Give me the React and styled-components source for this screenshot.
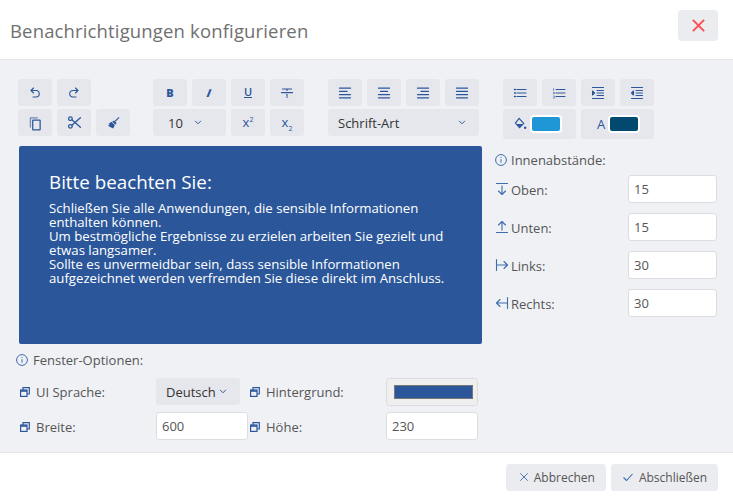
import React from "react";
import styled, { createGlobalStyle } from "styled-components";

const Global = createGlobalStyle`
  html, body { margin: 0; padding: 0; background: #fff; }
  body { font-family: "Open Sans", "Noto Sans", sans-serif; color: #444; }
  * { box-sizing: border-box; }
`;
const BLUE = "#2b579a";
const Dialog = styled.div`width: 733px; height: 503px; display: flex; flex-direction: column; background: #fff; overflow: hidden;`;
const Header = styled.header`height: 60px; flex: none; display: flex; align-items: center; justify-content: space-between; padding: 0 15px 0 10px; border-bottom: 1px solid #e6e6e8;`;
const Title = styled.h1`margin: 2px 0 0; font-size: 18.5px; font-weight: 400; color: #707070; letter-spacing: .15px;`;
const CloseButton = styled.button`width: 40px; height: 31px; margin-top: -9px; border: 0; border-radius: 4px; background: #ebecf0; display: flex; align-items: center; justify-content: center; padding: 0;`;
const Body = styled.main`height: 392px; flex: none; background: #f0f1f5; padding: 19px 15px 0 18px;`;
const Toolbar = styled.div`display: flex; gap: 24px; height: 60px;`;
const Group = styled.div`display: grid; grid-template-columns: repeat(4, 34px); grid-auto-rows: 27px; column-gap: 5px; row-gap: 3px; align-content: start;`;
const SmallGroup = styled(Group)`grid-template-columns: repeat(3, 34px); width: 111px;`;
const ToolButton = styled.button`
  border: 0; border-radius: 3px; background: #e6e7ec; padding: 0; color: ${BLUE};
  display: flex; align-items: center; justify-content: center;
  grid-column: ${p => p.$span ? `span ${p.$span}` : "auto"};
  font-family: inherit;
`;
const ColorButton = styled(ToolButton)`grid-column: span 2; height: 30px; gap: 3px; padding: ${p => p.$pad};`;
const Blank = styled.span``;
const Glyph = styled.span`font-size: ${p => p.$size || 11}px; font-weight: ${p => p.$weight || 500}; font-style: ${p => p.$italic ? "italic" : "normal"}; border-bottom: ${p => p.$under ? `1px solid ${BLUE}` : "0"}; line-height: ${p => p.$under ? "10px" : 1}; color: ${BLUE}; transform: ${p => p.$italic ? "skewX(-10deg)" : "none"};`;
const Sup = styled.span`font-size: 13px; font-weight: 500; color: ${BLUE}; line-height: 1; sup, sub { font-size: 7px; line-height: 0; }`;
const SelectButton = styled(ToolButton)`justify-content: ${p => p.$wide ? "space-between" : "flex-start"}; padding: 0 13px 0 ${p => p.$wide ? "10px" : "15px"}; color: #333; font-size: 13px; gap: 11px;`;
const Swatch = styled.span`border: 2px solid #fff; box-sizing: content-box; width: 28px; height: 14px; border-radius: 4px; background: ${p => p.$color};`;
const Content = styled.div`display: grid; grid-template-columns: 465px 1fr; column-gap: 12px; margin-top: 7px;`;
const Left = styled.div`display: flex; flex-direction: column;`;
const Editor = styled.div`margin-left: 1px; width: 463px; height: 198px; background: ${BLUE}; border-radius: 2px; padding: 24px 30px; color: #fff;`;
const EditorTitle = styled.h2`margin: 0 0 7px; font-size: 18.8px; line-height: 24px; font-weight: 500;`;
const EditorText = styled.p`margin: 0; font-size: 13.2px; line-height: 14px; width: 410px;`;
const Right = styled.aside`padding: 5px 1px 0 0;`;
const SectionLabel = styled.div`display: flex; align-items: center; gap: 4px; font-size: 13px; color: #555; height: 18px;`;
const WindowLabel = styled(SectionLabel)`gap: 5px;`;
const PadRows = styled.div`display: flex; flex-direction: column; gap: 10px; margin-top: 6px;`;
const PadRow = styled.label`display: flex; align-items: center; height: 28px; font-size: 13px; color: #555; gap: 2px;`;
const PadLabel = styled.span`flex: 1; padding-top: 2px;`;
const Input = styled.input`
  width: ${p => p.$w}px; height: 28px; border: 1px solid #dcdde2; border-radius: 3px; background: #fff;
  padding: 0 5px; font: 13px "Open Sans", sans-serif; color: #555; outline: 0;
`;
const WindowSection = styled.section`margin-top: 7px; margin-left: -2px;`;
const OptionsGrid = styled.div`display: grid; grid-template-columns: 136px 92px 138px 92px; grid-auto-rows: 28px; row-gap: 7px; margin-top: 8px; padding-left: 4px;`;
const OptionLabel = styled.label`display: flex; align-items: center; gap: 6px; font-size: 13px; color: #555; height: 28px; padding: 2px 0 0 ${p => p.$inset ? "2px" : "0"};`;
const LangSelect = styled.button`width: 84px; height: 27px; margin-top: 1px; border: 0; border-radius: 3px; background: #e6e7ec; font: 13px "Open Sans", sans-serif; color: #333; display: flex; align-items: center; justify-content: flex-start; gap: 3px; padding: 0 0 0 10px;`;
const ColorPick = styled.div`width: 92px; height: 28px; margin-top: 1px; border: 1px solid #dcdde2; border-radius: 3px; background: #efefef; display: flex; align-items: center; justify-content: center; padding-left: 3px;`;
const ColorBar = styled.span`width: 79px; height: 14px; border: 1px solid #777; background: ${BLUE};`;
const Footer = styled.footer`flex: 1; display: flex; align-items: center; justify-content: flex-end; gap: 5px; padding: 0 15px 2px 0; border-top: 1px solid #e6e6e8;`;
const FootButton = styled.button`height: 27px; border: 0; border-radius: 3px; background: #ebecf0; font: 12px "Open Sans", sans-serif; color: #555; display: flex; align-items: center; gap: 5px; padding: 0 11px 0 ${p => p.$left || 11}px;`;

const Icon = ({ size = 14, color = BLUE, sw = 1.1, children }) => (
  <svg width={size} height={size} viewBox="0 0 14 14" fill="none" stroke={color} strokeWidth={sw} strokeLinecap="round" strokeLinejoin="round">{children}</svg>
);
const Undo = () => <Icon><path d="M5.5 2 3 4.5 5.5 7M3 4.5h5a3.2 3.2 0 0 1 0 6.5H5" /></Icon>;
const Redo = () => <Icon><path d="M8.5 2 11 4.5 8.5 7M11 4.5H6a3.2 3.2 0 0 0 0 6.5h3" /></Icon>;
const Copy = () => <Icon size={16}><path d="M3 10.5V2.5h6" opacity=".65" /><rect x="5" y="4.5" width="6.5" height="8.5" rx=".4" /></Icon>;
const Cut = () => <Icon size={15} sw={1.2}><circle cx="3.2" cy="3.4" r="1.7" /><circle cx="3.2" cy="10.6" r="1.7" /><path d="M4.6 4.4 12.5 11.5M4.6 9.6 12.5 2.5" /></Icon>;
const Broom = () => <svg width="13" height="13" viewBox="0 0 14 14" fill={BLUE}><path d="M12.6 1 8.4 5l1 1 4-4.2z" /><path d="M7.8 4.8 10.4 7.6 8.8 9.4 5.6 6z" /><path d="M4.8 6.2 8.4 10 6.6 13.4 .8 10.4l2.2-.6-1.4-1.3z" /></svg>;
const Strike = () => <Icon size={14} sw={1.2}><path d="M2.5 3h9M7 3v1.5M1.5 6.7h11" /><path d="M7 8.6v.9" /><path d="M6.5 11h1" /></Icon>;
const Lines = ({ rows }) => <Icon size={14} sw={1.25}>{rows.map(([a, b], i) => <path key={i} d={`M${a} ${2.2 + i * 3.2}H${b}`} />)}</Icon>;
const Chevron = ({ color = BLUE }) => <svg width="8" height="5" viewBox="0 0 9 6" fill="none" stroke={color} strokeWidth="1.2"><path d="M1 1l3.5 3.5L8 1" /></svg>;
const BulletList = () => <Icon><path d="M1.5 3.5h1M1.5 7h1M1.5 10.5h1" strokeWidth="1.4" /><path d="M4 3.5h9M4 7h9M4 10.5h9" /></Icon>;
const NumberList = () => <Icon><path d="M1.5 2.5v2M1.3 6.5h1.4v1.2H1.3M1.3 10h1.4v2H1.3" strokeWidth=".8" opacity=".7" /><path d="M4 3.5h9M4 7h9M4 10.5h9" /></Icon>;
const IndentIn = () => <Icon><path d="M1.5 1.5h11M6 4.5h6.5M6 7h6.5M6 9.5h6.5M1.5 12.5h11" /><path d="M1.5 5l2 2-2 2z" fill={BLUE} /></Icon>;
const IndentOut = () => <Icon><path d="M1.5 1.5h11M6 4.5h6.5M6 7h6.5M6 9.5h6.5M1.5 12.5h11" /><path d="M3.5 5l-2 2 2 2z" fill={BLUE} /></Icon>;
const Fill = () => <svg width="13" height="14" viewBox="0 0 14 14"><path d="M5.5 1 1.5 6 6 11l4.5-4.5z" fill="none" stroke={BLUE} strokeWidth="1.2" /><path d="M2.2 7h7.6L6 10.6z" fill={BLUE} /><circle cx="12" cy="11" r="1.3" fill={BLUE} /></svg>;
const Info = () => <svg width="12" height="12" viewBox="0 0 12 12" fill="none" stroke="#3d6cae" strokeWidth="1"><circle cx="6" cy="6" r="5.4" /><path d="M6 5.2v3.4M6 3v1" /></svg>;
const ArrowDown = () => <Icon size={14} color="#3d6cae"><path d="M1.5 1.5h11M7 4v8.5M3.5 9 7 12.5 10.5 9" /></Icon>;
const ArrowUp = () => <Icon size={14} color="#3d6cae"><path d="M1.5 12.5h11M7 10V1.5M3.5 5 7 1.5 10.5 5" /></Icon>;
const ArrowRight = () => <Icon size={14} color="#3d6cae"><path d="M1.5 1.5v11M1.5 7h11M9 3.5 12.5 7 9 10.5" /></Icon>;
const ArrowLeft = () => <Icon size={14} color="#3d6cae"><path d="M12.5 1.5v11M12.5 7h-11M5 3.5 1.5 7 5 10.5" /></Icon>;
const Windows = () => <svg width="10" height="10" viewBox="0 0 10 10" fill="none" stroke={BLUE} strokeWidth="1.2"><rect x=".6" y="3" width="6.4" height="6.4" /><path d="M3 3V.7h6.3V7H7" /><path d="M.6 4h6.4" strokeWidth="1.6" /></svg>;
const X = ({ size = 12, color = "#3d6cae", sw = 1.1 }) => <svg width={size} height={size} viewBox="0 0 12 12" fill="none" stroke={color} strokeWidth={sw}><path d="M1.5 1.5l9 9M10.5 1.5l-9 9" /></svg>;
const Check = () => <svg width="12" height="12" viewBox="0 0 12 12" fill="none" stroke="#3d6cae" strokeWidth="1.1"><path d="M1.5 6.5 4.5 9.5 10.5 3" /></svg>;

const padRows = [
  ["Oben:", "15", ArrowDown],
  ["Unten:", "15", ArrowUp],
  ["Links:", "30", ArrowRight],
  ["Rechts:", "30", ArrowLeft],
];

export default function App() {
  return (
    <Dialog>
      <Global />
      <Header>
        <Title>Benachrichtigungen konfigurieren</Title>
        <CloseButton aria-label="Schließen"><X size={15} color="#ff4a4f" sw={1.5} /></CloseButton>
      </Header>
      <Body>
        <Toolbar>
          <SmallGroup>
            <ToolButton><Undo /></ToolButton>
            <ToolButton><Redo /></ToolButton>
            <Blank />
            <ToolButton><Copy /></ToolButton>
            <ToolButton><Cut /></ToolButton>
            <ToolButton><Broom /></ToolButton>
          </SmallGroup>
          <Group>
            <ToolButton><Glyph $weight={800}>B</Glyph></ToolButton>
            <ToolButton><Glyph $weight={800} $italic>I</Glyph></ToolButton>
            <ToolButton><Glyph $weight={600} $under>U</Glyph></ToolButton>
            <ToolButton><Strike /></ToolButton>
            <SelectButton $span={2}>10 <Chevron /></SelectButton>
            <ToolButton><Sup>x<sup>2</sup></Sup></ToolButton>
            <ToolButton><Sup>x<sub>2</sub></Sup></ToolButton>
          </Group>
          <Group>
            <ToolButton><Lines rows={[[1.5, 12.5], [1.5, 9], [1.5, 12.5], [1.5, 12.5]]} /></ToolButton>
            <ToolButton><Lines rows={[[1.5, 12.5], [3.5, 10.5], [1.5, 12.5], [1.5, 12.5]]} /></ToolButton>
            <ToolButton><Lines rows={[[1.5, 12.5], [5, 12.5], [1.5, 12.5], [1.5, 12.5]]} /></ToolButton>
            <ToolButton><Lines rows={[[1.5, 12.5], [1.5, 12.5], [1.5, 12.5], [1.5, 12.5]]} /></ToolButton>
            <SelectButton $span={4} $wide>Schrift-Art <Chevron /></SelectButton>
          </Group>
          <Group>
            <ToolButton><BulletList /></ToolButton>
            <ToolButton><NumberList /></ToolButton>
            <ToolButton><IndentIn /></ToolButton>
            <ToolButton><IndentOut /></ToolButton>
            <ColorButton $pad="0 4px 0 0"><Fill /><Swatch $color="#1f97d6" /></ColorButton>
            <ColorButton $pad="0 0 0 2px"><Glyph $size={13}>A</Glyph><Swatch $color="#03486e" /></ColorButton>
          </Group>
        </Toolbar>
        <Content>
          <Left>
            <Editor>
              <EditorTitle>Bitte beachten Sie:</EditorTitle>
              <EditorText>
                Schließen Sie alle Anwendungen, die sensible Informationen enthalten können.<br />
                Um bestmögliche Ergebnisse zu erzielen arbeiten Sie gezielt und etwas langsamer.<br />
                Sollte es unvermeidbar sein, dass sensible Informationen aufgezeichnet werden verfremden Sie diese direkt im Anschluss.
              </EditorText>
            </Editor>
            <WindowSection>
              <WindowLabel><Info />Fenster-Optionen:</WindowLabel>
              <OptionsGrid>
                <OptionLabel><Windows />UI Sprache:</OptionLabel>
                <LangSelect>Deutsch<Chevron /></LangSelect>
                <OptionLabel $inset><Windows />Hintergrund:</OptionLabel>
                <ColorPick><ColorBar /></ColorPick>
                <OptionLabel><Windows />Breite:</OptionLabel>
                <Input $w={92} defaultValue="600" />
                <OptionLabel $inset><Windows />Höhe:</OptionLabel>
                <Input $w={92} defaultValue="230" />
              </OptionsGrid>
            </WindowSection>
          </Left>
          <Right>
            <SectionLabel><Info />Innenabstände:</SectionLabel>
            <PadRows>
              {padRows.map(([label, value, I]) => (
                <PadRow key={label}><I /><PadLabel>{label}</PadLabel><Input $w={89} defaultValue={value} /></PadRow>
              ))}
            </PadRows>
          </Right>
        </Content>
      </Body>
      <Footer>
        <FootButton $left={13}><X size={10} />Abbrechen</FootButton>
        <FootButton><Check />Abschließen</FootButton>
      </Footer>
    </Dialog>
  );
}
